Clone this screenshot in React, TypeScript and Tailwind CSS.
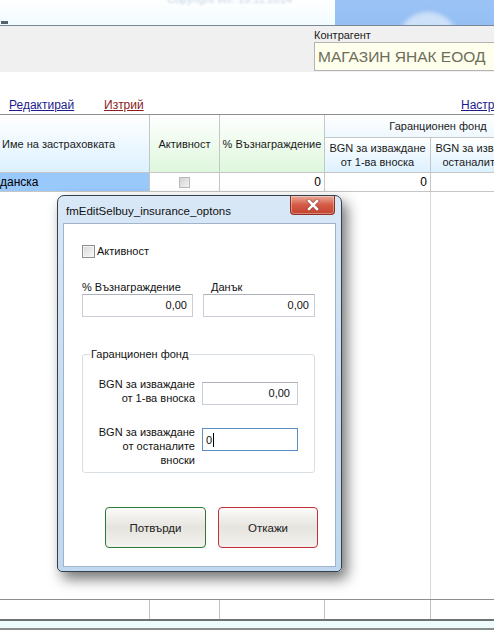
export default function App() {
  return (
    <div className="relative w-[494px] h-[630px] overflow-hidden bg-white text-black font-['Liberation_Sans',Arial,sans-serif]">
      {/* Banner */}
      <div className="flex h-[25px] overflow-hidden">
        <div className="flex-1 flex flex-col bg-gradient-to-b from-white to-[#f1fbff]">
          <div className="pl-[167px] -mt-[7px] text-[11px] leading-[13px] text-[#c3d3e2] blur-[0.8px] whitespace-nowrap">
            Copyright ver. 19.11.2014
          </div>
          <div className="mt-auto ml-[1px] mb-[1px] w-[7px] h-[3px] bg-[#55606a] blur-[0.5px]" />
        </div>
        <div className="relative w-[159px] overflow-hidden bg-gradient-to-b from-[#9bc3f6] to-[#95bff4]">
          <div className="absolute left-[62px] top-[12px] w-[62px] h-[62px] rounded-full bg-[#cde1f8] blur-[2px]" />
        </div>
      </div>
      <div className="h-px bg-[#7a8896]" />

      {/* Gray panel */}
      <div className="h-[46px] bg-[#f0f0f0] pl-[314px] pt-[3px] flex flex-col">
        <div className="text-[11px] leading-[13px] text-[#1a1a1a] whitespace-nowrap">Контрагент</div>
        <div className="h-[29px] w-[200px] bg-[#ffffee] border border-[#b4b4b4] border-r-0 pl-[3px] text-[15.5px] leading-[27px] text-[#6d6d58] whitespace-nowrap">
          МАГАЗИН ЯНАК ЕООД
        </div>
      </div>

      {/* Links */}
      <div className="flex pt-[26px] mb-[1px] h-[41px] text-[12px] leading-[14px] whitespace-nowrap">
        <div className="w-[104px] shrink-0 pl-[9px]">
          <span className="underline text-[#1c1c8c]">Редактирай</span>
        </div>
        <div className="w-[357px] shrink-0">
          <span className="underline text-[#8a1c1c]">Изтрий</span>
        </div>
        <div className="shrink-0">
          <span className="underline text-[#1c1c8c]">Настройки</span>
        </div>
      </div>

      {/* Table header */}
      <div className="border-t border-[#8e8e8e] flex h-[59px] text-[11px] leading-[14px] text-[#1a1a1a]">
        <div className="w-[150px] shrink-0 border-r border-b border-[#c6c6c6] bg-gradient-to-b from-white to-[#dcf1ff] flex items-center pl-[2px] whitespace-nowrap">
          Име на застраховката
        </div>
        <div className="w-[70px] shrink-0 border-r border-b border-[#c6c6c6] bg-gradient-to-b from-white to-[#def7dc] flex items-center justify-center whitespace-nowrap">
          Активност
        </div>
        <div className="w-[105px] shrink-0 border-r border-b border-[#c6c6c6] bg-gradient-to-b from-white to-[#def7dc] flex items-center justify-center whitespace-nowrap">
          % Възнаграждение
        </div>
        <div className="w-[226px] shrink-0 flex flex-col">
          <div className="h-[23px] border-b border-[#c6c6c6] bg-gradient-to-b from-white to-[#eef8ff] flex items-center justify-center whitespace-nowrap">
            Гаранционен фонд
          </div>
          <div className="flex flex-1">
            <div className="w-[106px] shrink-0 border-r border-b border-[#c6c6c6] bg-gradient-to-b from-white to-[#dcf1ff] flex flex-col items-center justify-center whitespace-nowrap">
              <span>BGN за изваждане</span>
              <span>от 1-ва вноска</span>
            </div>
            <div className="w-[120px] shrink-0 border-r border-b border-[#c6c6c6] bg-gradient-to-b from-white to-[#dcf1ff] flex flex-col items-center justify-center whitespace-nowrap">
              <span>BGN за изваждане от</span>
              <span>останалите вноски</span>
            </div>
          </div>
        </div>
      </div>

      {/* Data row */}
      <div className="flex h-[19px] text-[12px] leading-[18px] border-b border-[#c6c6c6]">
        <div className="w-[150px] shrink-0 bg-[#99c8fb] border-r border-[#c6c6c6] whitespace-nowrap">данска</div>
        <div className="w-[70px] shrink-0 border-r border-[#c6c6c6] flex items-center justify-center">
          <div className="w-[11px] h-[11px] border border-[#b9b9b9] bg-gradient-to-br from-[#d2d2d2] to-[#f4f4f4]" />
        </div>
        <div className="w-[105px] shrink-0 border-r border-[#c6c6c6] text-right pr-[3px]">0</div>
        <div className="w-[106px] shrink-0 border-r border-[#c6c6c6] text-right pr-[3px]">0</div>
        <div className="flex-1" />
      </div>

      {/* Empty body */}
      <div className="flex h-[407px]">
        <div className="w-[431px] shrink-0 border-r border-[#dadada]" />
      </div>

      {/* Bottom row */}
      <div className="flex h-[20px] border-t border-[#8e8e8e]">
        <div className="w-[150px] shrink-0 border-r border-[#c0c0c0]" />
        <div className="w-[70px] shrink-0 border-r border-[#c0c0c0]" />
        <div className="w-[105px] shrink-0 border-r border-[#c0c0c0]" />
        <div className="w-[106px] shrink-0 border-r border-[#c0c0c0]" />
      </div>
      <div className="h-[2px] bg-[#6f7272]" />
      <div className="h-[7px] bg-[#eefbfb]" />
      <div className="h-[2px] bg-[#8a8d8d]" />

      {/* Dialog */}
      <div className="absolute left-[57px] top-[195px] w-[285px] h-[377px] flex flex-col rounded-t-[7px] rounded-b-[5px] border border-[#34404c] bg-gradient-to-b from-[#d9e8f7] via-[#c9ddf2] to-[#c1d8ef] shadow-[5px_7px_14px_rgba(0,0,0,0.55)]">
        <div className="h-[27px] flex items-start shrink-0">
          <div className="pl-[8px] pt-[8px] text-[11.5px] leading-[14px] text-[#111] whitespace-nowrap">
            fmEditSelbuy_insurance_optons
          </div>
          <div className="ml-auto mr-[6px] w-[45px] h-[19px] rounded-b-[4px] border border-t-0 border-[#8c2e22] bg-gradient-to-b from-[#e9a899] via-[#d45a45] to-[#c3432f] flex items-center justify-center shadow-[inset_0_0_0_1px_rgba(255,255,255,0.35)]">
            <svg width="14" height="12" viewBox="0 0 14 12">
              <path d="M3 2 L11 10 M11 2 L3 10" stroke="#6a2a20" strokeWidth="4" strokeLinecap="square" opacity="0.5" />
              <path d="M3 2 L11 10 M11 2 L3 10" stroke="#ffffff" strokeWidth="2.6" strokeLinecap="square" />
            </svg>
          </div>
        </div>
        <div className="mx-[5px] mb-[4px] flex-1 bg-white border border-[#9fb3ca] flex flex-col text-[11px] leading-[14px] text-[#111]">
          {/* checkbox */}
          <div className="flex items-center pt-[20px] pl-[18px]">
            <div className="w-[13px] h-[13px] border border-[#8f8f8f] bg-gradient-to-br from-[#d6d6d6] to-[#fbfbfb] shadow-[inset_0_0_0_1px_#f4f4f4]" />
            <span className="ml-[2px]">Активност</span>
          </div>
          {/* labels */}
          <div className="flex mt-[22px] pl-[18px] whitespace-nowrap">
            <div className="w-[129px]">% Възнаграждение</div>
            <div>Данък</div>
          </div>
          <div className="flex pl-[18px]">
            <div className="w-[111px] h-[23px] border border-[#c9ced6] border-t-[#aeb3bb] text-right pr-[5px] leading-[21px]">0,00</div>
            <div className="ml-[10px] w-[112px] h-[23px] border border-[#c9ced6] border-t-[#aeb3bb] text-right pr-[5px] leading-[21px]">0,00</div>
          </div>
          {/* group */}
          <fieldset className="mt-[30px] ml-[18px] w-[233px] border border-[#d7dee4] rounded-[3px] pb-[5px]">
            <legend className="ml-[7px] px-[1px] leading-[14px]">Гаранционен фонд</legend>
            <div className="flex items-start mt-[16px]">
              <div className="w-[112px] text-right">
                <div>BGN за изваждане</div>
                <div>от 1-ва вноска</div>
              </div>
              <div className="ml-[7px] mt-[5px] w-[96px] h-[23px] border border-[#c9ced6] border-t-[#aeb3bb] text-right pr-[7px] leading-[21px]">0,00</div>
            </div>
            <div className="flex items-start mt-[20px]">
              <div className="w-[112px] text-right">
                <div>BGN за изваждане</div>
                <div>от останалите</div>
                <div>вноски</div>
              </div>
              <div className="ml-[7px] mt-[3px] w-[96px] h-[23px] border border-[#5b8fc4] flex items-center pl-[3px]">
                <span>0</span>
                <span className="w-px h-[14px] bg-black ml-[1px]" />
              </div>
            </div>
          </fieldset>
          {/* buttons */}
          <div className="flex mt-[34px] pl-[41px] text-[11.5px]">
            <div className="w-[101px] h-[41px] rounded-[4px] border border-[#2d7a38] bg-gradient-to-b from-[#fbfbfa] via-[#e6e4de] to-[#f3f2ee] flex items-center justify-center text-[#222]">
              Потвърди
            </div>
            <div className="ml-[12px] w-[100px] h-[41px] rounded-[4px] border border-[#c42f3c] bg-gradient-to-b from-[#fbfbfa] via-[#e6e4de] to-[#f3f2ee] flex items-center justify-center text-[#222]">
              Откажи
            </div>
          </div>
        </div>
      </div>
    </div>
  );
}
